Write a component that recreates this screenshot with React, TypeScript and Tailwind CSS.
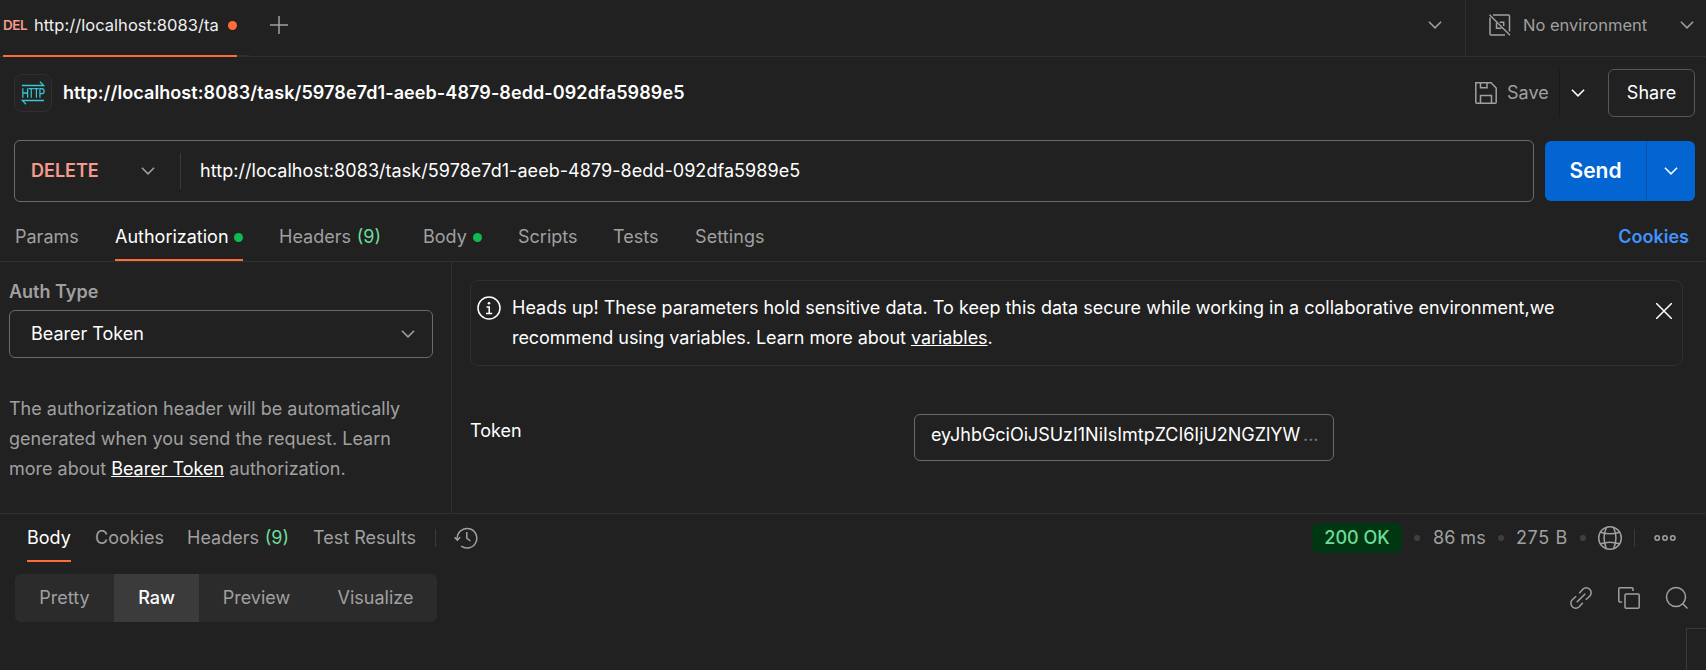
import type { ReactNode } from "react";

function Chevron({ className = "" }: { className?: string }) {
  return (
    <svg width="14" height="8" viewBox="0 0 14 8" fill="none" stroke="currentColor" strokeWidth="1.5" className={"shrink-0 " + className}>
      <path d="M0.9 0.8 7 6.9l6.1-6.1" />
    </svg>
  );
}

function HttpIcon() {
  return (
    <svg width="24" height="26" viewBox="0 0 26 26" preserveAspectRatio="none" fill="none" stroke="#37c8d6" strokeWidth="1.3">
      <path d="M1 5.5h23.5L20.5 1.7M25 20.5H1.5l4 3.8" />
      <path d="M2 8.2v9.6M7.2 8.2v9.6M2 13h5.2M8.4 8.7h5.4M11.1 8.7v9.1M14.2 8.7h5M16.7 8.700v9.100M20.500 17.800V8.700h2a2.500 2.500 0 0 1 0 5h-2" />
    </svg>
  );
}

function NoEnvIcon() {
  return (
    <svg width="24" height="24" viewBox="0 0 24 24" fill="none" stroke="currentColor" strokeWidth="1.5" className="shrink-0">
      <path d="M5 2h15.500a1 1 0 0 1 1 1v15.500M17 22H3a1 1 0 0 1-1-1V4.500M1.500 1.700l20.500 20.500" />
      <path d="M11.700 9.300h4v3.800M8.500 9.800v5.400h5" />
    </svg>
  );
}

function SaveIcon() {
  return (
    <svg width="24" height="24" viewBox="0 0 24 24" fill="none" stroke="currentColor" strokeWidth="1.5" className="shrink-0">
      <path d="M1.800 1.800h15.200l5.200 5.200v14.200a1 1 0 0 1-1 1H2.800a1 1 0 0 1-1-1z" />
      <path d="M6.500 1.800v5h6.500v-5M6.500 22.200v-7.700h11v7.700" />
    </svg>
  );
}

function HistoryIcon() {
  return (
    <svg width="24" height="24" viewBox="0 0 24 24" fill="none" stroke="currentColor" strokeWidth="1.5" className="shrink-0">
      <path d="M3.200 14V11.500A9.800 9.800 0 1 1 7.200 20.200" />
      <path d="M0.600 11.300 3.300 14.200 6.200 11.300M12.800 6v6.200l3.600 2.800" />
    </svg>
  );
}

function GlobeIcon() {
  return (
    <svg width="26" height="26" viewBox="0 0 26 26" fill="none" stroke="currentColor" strokeWidth="1.5" className="shrink-0">
      <circle cx="13" cy="13" r="11.300" />
      <path d="M9.500 2.300c-3.200 7-3.200 14.400 0 21.400M16.500 2.300c3.200 7 3.200 14.400 0 21.400M3.600 7.300c6 2 12.800 2 18.800 0M3.600 18.700c6-2 12.800-2 18.800 0" />
    </svg>
  );
}

function MoreIcon() {
  return (
    <svg width="24" height="8" viewBox="0 0 24 8" fill="none" stroke="currentColor" strokeWidth="1.5" className="shrink-0">
      <circle cx="4.200" cy="4" r="2.200" />
      <circle cx="12" cy="4" r="2.200" />
      <circle cx="19.800" cy="4" r="2.200" />
    </svg>
  );
}

function LinkIcon() {
  return (
    <svg width="24" height="24" viewBox="0 0 24 24" fill="none" stroke="currentColor" strokeWidth="1.5" className="shrink-0">
      <path d="M7.700 16.300l8.600-8.600" />
      <path d="M10.200 7.200 13.800 3.300a4.800 4.800 0 0 1 6.900 6.900L16.800 13.800M7.200 10.200 3.300 13.800a4.800 4.800 0 0 0 6.900 6.900L13.800 16.800" />
    </svg>
  );
}

function CopyIcon() {
  return (
    <svg width="24" height="24" viewBox="0 0 24 24" fill="none" stroke="currentColor" strokeWidth="1.5" className="shrink-0">
      <rect x="8" y="8" width="14.200" height="14.200" rx="1.200" />
      <path d="M5 16H2.800a1 1 0 0 1-1-1V2.800a1 1 0 0 1 1-1H15a1 1 0 0 1 1 1V5" />
    </svg>
  );
}

function SearchIcon() {
  return (
    <svg width="24" height="24" viewBox="0 0 24 24" fill="none" stroke="currentColor" strokeWidth="1.5" className="shrink-0">
      <circle cx="11" cy="11" r="9.500" />
      <path d="M17.300 17.300l5.200 5.200" />
    </svg>
  );
}

function InfoIcon() {
  return (
    <svg width="24" height="24" viewBox="0 0 24 24" fill="none" stroke="currentColor" strokeWidth="1.5" className="shrink-0">
      <circle cx="12" cy="12" r="11" />
      <circle cx="12" cy="7.300" r="1.300" fill="currentColor" stroke="none" />
      <path d="M9.500 11h2.700v6.500M9 17.500h6.200" />
    </svg>
  );
}

function Tab({ className, active, children }: { className: string; active?: boolean; children: ReactNode }) {
  return (
    <div className={`flex h-full shrink-0 items-center justify-between border-b-2 ${className} ${active ? "border-[#ff6c37] text-white" : "border-transparent"}`}>
      {children}
    </div>
  );
}

const GreenDot = () => <i className="size-[9px] shrink-0 rounded-full bg-[#0cbb52]" />;
const Separator = () => <i className="size-[6px] shrink-0 rounded-full bg-[#3f3f3f]" />;

export default function App() {
  return (
    <div className="flex h-[670px] w-[1706px] flex-col overflow-hidden whitespace-nowrap bg-[#212121] font-['Inter',sans-serif] text-[18px] leading-[30px] text-[#a0a0a0]">
      <div className="flex h-[57px] shrink-0 border-b border-[#303030]">
        <div className="ml-[3px] flex h-[57px] w-[234px] shrink-0 items-center border-b-2 border-[#ff6c37] pb-[5px]">
          <span className="w-[31px] text-[13.5px] font-semibold tracking-[-0.4px] text-[#f79a8e]">DEL</span>
          <span className="w-[194px] text-[16.5px] tracking-[0.04px] text-[#f0f0f0]">http://localhost:8083/ta</span>
          <i className="size-[9px] shrink-0 rounded-full bg-[#ff6c37]" />
        </div>
        <i className="mt-[55px] h-px w-[12px] bg-[#303030]" />
        <div className="ml-[21px] flex h-[50px] items-center">
          <svg width="18" height="18" viewBox="0 0 18 18" stroke="currentColor" strokeWidth="1.5">
            <path d="M9 0v18M0 9h18" />
          </svg>
        </div>
        <div className="ml-auto flex h-full">
          <div className="flex h-[50px] w-[37px] items-center">
            <Chevron />
          </div>
          <div className="flex w-[241px] border-l border-[#303030] pl-[22px]">
            <div className="flex h-[50px] w-full items-center">
              <NoEnvIcon />
              <span className="ml-[11px] text-[16.5px]">No environment</span>
              <Chevron className="mr-[12px] ml-auto" />
            </div>
          </div>
        </div>
      </div>

      <div className="flex h-[72px] shrink-0 items-center pr-[11px] pl-[14px]">
        <div className="flex size-[38px] items-center justify-center rounded-[8px] border border-[#2f2f2f] bg-[#232323]">
          <HttpIcon />
        </div>
        <span className="ml-[11px] font-semibold tracking-[0.088px] text-white">http://localhost:8083/task/5978e7d1-aeeb-4879-8edd-092dfa5989e5</span>
        <div className="ml-auto flex h-[48px] items-center">
          <SaveIcon />
          <span className="ml-[9px] w-[52px]">Save</span>
          <div className="flex h-full w-[49px] items-center border-l border-[#1a1a1a] pl-[11px] text-white">
            <Chevron />
          </div>
          <div className="flex h-full w-[87px] items-center justify-center rounded-[6px] border border-[#575757] text-white">Share</div>
        </div>
      </div>

      <div className="mt-[11px] flex h-[62px] shrink-0 items-center pr-[11px] pl-[14px]">
        <div className="flex h-full w-[1520px] items-center rounded-[6px] border border-[#6b6b6b]">
          <div className="flex h-[36px] w-[166px] items-center justify-between border-r border-[#3a3a3a] pr-[25px] pl-[16px]">
            <span className="font-semibold text-[#f79a8e]">DELETE</span>
            <Chevron />
          </div>
          <span className="ml-[19px] tracking-[0.05px] text-white">http://localhost:8083/task/5978e7d1-aeeb-4879-8edd-092dfa5989e5</span>
        </div>
        <div className="ml-auto flex h-[60px] w-[150px] overflow-hidden rounded-[6px] bg-[#0265d2] text-white">
          <div className="flex w-[101px] items-center justify-center text-[21px] font-semibold">Send</div>
          <div className="flex flex-1 items-center justify-center border-l border-[#0452a8]">
            <Chevron />
          </div>
        </div>
      </div>

      <div className="flex h-[60px] shrink-0 border-b border-[#303030] pl-[15px]">
        <div className="flex h-[59px]">
          <Tab className="mr-[36px] w-[64px] pt-[13px]">Params</Tab>
          <Tab className="mr-[36px] w-[128px] pt-[13px]" active>Authorization<GreenDot /></Tab>
          <Tab className="mr-[42px] w-[102px] pt-[13px]"><span>Headers</span><span className="text-[#6bdd9a]">(9)</span></Tab>
          <Tab className="mr-[36px] w-[59px] pt-[13px]">Body<GreenDot /></Tab>
          <Tab className="mr-[36px] w-[59px] pt-[13px]">Scripts</Tab>
          <Tab className="mr-[37px] w-[45px] pt-[13px]">Tests</Tab>
          <Tab className="w-[70px] pt-[13px] tracking-[0.1px]">Settings</Tab>
        </div>
        <span className="mt-[20px] mr-[17px] ml-auto font-semibold text-[#4292ff]">Cookies</span>
      </div>

      <div className="flex h-[252px] shrink-0 border-b border-[#303030]">
        <div className="w-[452px] shrink-0 border-r border-[#303030] pt-[15px] pl-[9px]">
          <div className="font-semibold">Auth Type</div>
          <div className="mt-[3px] flex h-[48px] w-[424px] items-center justify-between rounded-[6px] border border-[#6b6b6b] pr-[17px] pl-[21px]">
            <span className="text-white">Bearer Token</span>
            <Chevron />
          </div>
          <p className="mt-[36px]">
            The authorization header will be automatically
            <br />
            generated when you send the request. Learn
            <br />
            more about <span className="text-white underline">Bearer Token</span> authorization.
          </p>
        </div>
        <div className="flex-1 pt-[18px] pl-[18px] text-white">
          <div className="flex h-[86px] w-[1213px] rounded-[8px] border border-[#303030] pt-[12px] pr-[10px] pl-[6px]">
            <div className="pt-[3px]">
              <InfoIcon />
            </div>
            <p className="ml-[11px]">
              Heads up! These parameters hold sensitive data. To keep this data secure while working in a collaborative environment,we
              <br />
              <span className="tracking-[-0.05px]">recommend using variables. Learn more about <span className="underline">variables</span>.</span>
            </p>
            <svg width="16" height="16" viewBox="0 0 16 16" stroke="currentColor" strokeWidth="1.5" className="mt-[10px] ml-auto">
              <path d="M0 0l16 16M16 0 0 16" />
            </svg>
          </div>
          <div className="mt-[48px] flex">
            <span className="mt-[2px] w-[444px]">Token</span>
            <div className="flex h-[47px] w-[420px] rounded-[6px] border border-[#6b6b6b] pt-[5px] pl-[16px]">
              <span className="w-[372px] tracking-[-0.03px]">eyJhbGciOiJSUzI1NiIsImtpZCI6IjU2NGZlYW</span>
              <span className="text-[#7c7c7c]">...</span>
            </div>
          </div>
        </div>
      </div>

      <div className="flex h-[48px] shrink-0 items-center">
        <div className="flex h-full pl-[27px]">
          <Tab className="mr-[24px] w-[44px] pt-[2px]" active>Body</Tab>
          <Tab className="mr-[23px] w-[69px] pt-[2px]">Cookies</Tab>
          <Tab className="mr-[24px] w-[102px] pt-[2px]"><span>Headers</span><span className="text-[#6bdd9a]">(9)</span></Tab>
          <Tab className="mr-[18px] w-[104px] pt-[2px]">Test Results</Tab>
        </div>
        <i className="h-[18px] w-px bg-[#3a3a3a]" />
        <span className="ml-[18px]">
          <HistoryIcon />
        </span>
        <div className="mr-[29px] ml-auto flex items-center">
          <span className="flex h-[30px] w-[90px] items-center justify-center rounded-[6px] bg-[#003612] font-medium text-[#6bdd9a]">200 OK</span>
          <span className="w-[12px]" />
          <Separator />
          <span className="ml-[13px] w-[65px]">86 ms</span>
          <Separator />
          <span className="ml-[12px] w-[64px] tracking-[0.6px]">275 B</span>
          <Separator />
          <span className="ml-[11px]">
            <GlobeIcon />
          </span>
          <i className="ml-[11px] h-[18px] w-px bg-[#3a3a3a]" />
          <span className="ml-[18px]">
            <MoreIcon />
          </span>
        </div>
      </div>

      <div className="mt-[12px] flex h-[48px] shrink-0 items-center pr-[17px] pl-[15px]">
        <div className="flex h-full w-[422px] overflow-hidden rounded-[6px] bg-[#2b2b2b]">
          <span className="flex w-[99px] items-center justify-center">Pretty</span>
          <span className="flex w-[85px] items-center justify-center bg-[#3b3b3b] font-medium text-white">Raw</span>
          <span className="flex w-[115px] items-center justify-center">Preview</span>
          <span className="flex flex-1 items-center justify-center">Visualize</span>
        </div>
        <div className="ml-auto flex gap-[24px]">
          <LinkIcon />
          <CopyIcon />
          <SearchIcon />
        </div>
      </div>

      <div className="mt-[6px] ml-auto h-[42px] w-[20px] shrink-0 border-t border-l border-[#3a3a3a]" />
    </div>
  );
}
